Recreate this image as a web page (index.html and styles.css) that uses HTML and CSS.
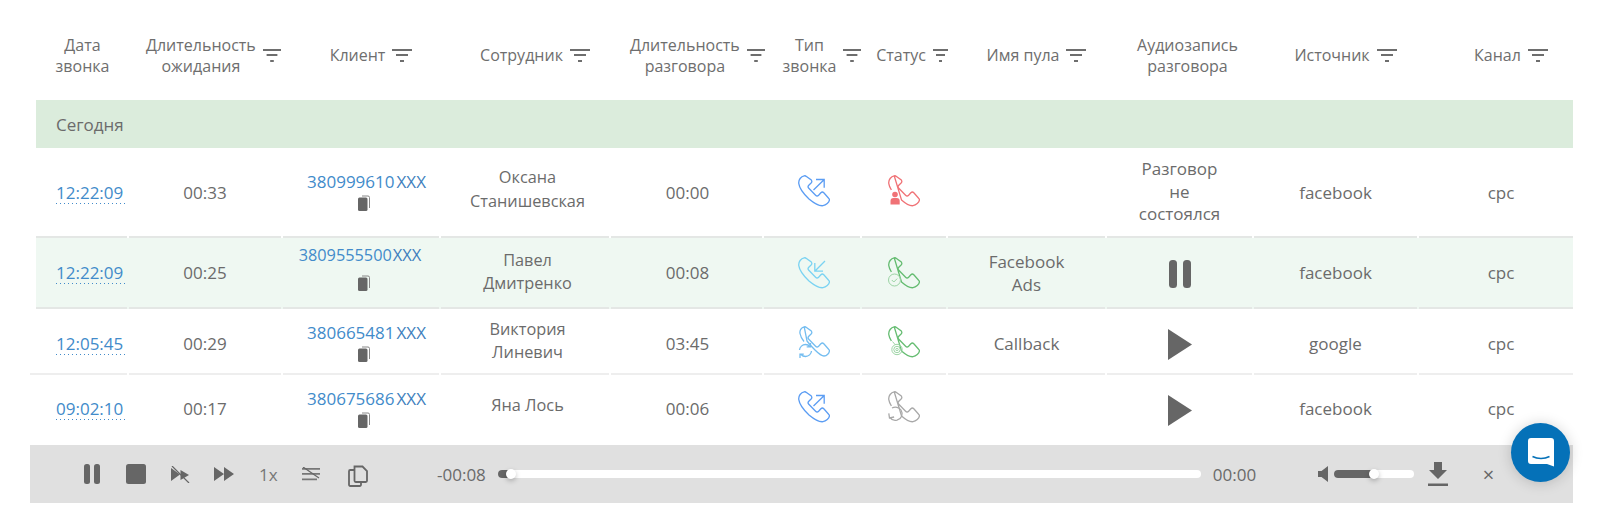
FILE: index.html
```html
<!DOCTYPE html>
<html lang="ru">
<head>
<meta charset="utf-8">
<title>Журнал звонков</title>
<link rel="stylesheet" href="styles.css">
</head>
<body>
<svg class="defs" aria-hidden="true">
  <defs>
    <symbol id="hs" viewBox="0 0 32 32"><path d="M6.200.8C3 1.400.3 4.800.8 8.600 1.500 14 6 19.200 11 24c5 4.200 10 7.200 14 6.700 3-.5 6.200-3.500 6.400-5.700.1-.8-.2-1.300-.8-1.800l-4.800-5.500c-.9-.9-2-.9-2.900 0l-2.300 2.500c-1 1-2 1-3 0l-6.800-7c-1-1-1-2 0-3l2.300-2.200c.9-.9.9-2 .2-3L8.500 1.600C7.900.9 7 .7 6.200.8Z"/></symbol>
    <symbol id="i-out" viewBox="0 0 32 32"><use href="#hs"/><path d="M15.500 15 26 4.800M18 4.500h8.200v8.200"/></symbol>
    <symbol id="i-in" viewBox="0 0 32 32"><use href="#hs"/><path d="M27 4 16.800 14.200M16.800 6v8.200H25"/></symbol>
    <symbol id="i-cb" viewBox="0 0 32 32"><path d="M6.200.8C3 1.400 1.500 4.800 2 7.500c.4 2.500 2 5.500 4 8M9 15c3 4 5.500 6.500 8 9 3 3 6 6 9 6 3 0 5.200-3 5.400-5 .1-.8-.2-1.300-.8-1.800l-4.800-5.500c-.9-.9-2-.9-2.900 0l-2.300 2.500c-1 1-2 1-3 0l-6.800-7c-1-1-1-2 0-3l2.300-2.200c.9-.9.9-2 .2-3L8.500 1.600C7.900.9 7 .7 6.200.8Z"/><path d="M1.500 24c.3-3 2.800-5.500 6-5.500 1.800 0 3.300.7 4.500 2M13.500 25c-.3 3-2.800 5.500-6 5.500-1.800 0-3.300-.7-4.500-2M12.500 17v3.800H8.700M2 32v-3.800h3.800"/></symbol>
    <symbol id="i-cut" viewBox="0 0 32 32"><path d="M6.200.8C3 1.400.3 4.800.8 8.600c.3 2 1.200 4.200 2.600 6.400M13.500 25c4 3.500 8.200 6.100 11.500 5.700 3-.5 6.200-3.500 6.400-5.700.1-.8-.2-1.300-.8-1.800l-4.800-5.500c-.9-.9-2-.9-2.900 0l-2.300 2.500c-1 1-2 1-3 0l-6.800-7c-1-1-1-2 0-3l2.300-2.200c.9-.9.9-2 .2-3L8.500 1.600C7.900.9 7 .7 6.200.8Z"/></symbol>
    <symbol id="i-gray" viewBox="0 0 32 32"><use href="#i-cut"/><path d="M4 17c3-1.500 7-1 9 2 2.500 4 .5 9-4 10.200-3 .7-5.500-.3-7-2.500M.8 22.300 1.500 27l4.600-1"/></symbol>
    <symbol id="filter" viewBox="0 0 20 14" preserveAspectRatio="none"><path d="M0 0h20v2H0zM4 5h12v2H4zM8 11h4v2H8z"/></symbol>
    <symbol id="copy" viewBox="0 0 12 16"><path class="copy-back" d="M4 1h6a1.500 1.500 0 0 1 1.500 1.500V13"/><rect x="0" y="2.500" width="9.500" height="13.500" rx="1.500"/></symbol>
  </defs>
</svg>

<main class="log">
  <div class="row head">
    <div class="th th-plain">Дата<br>звонка</div>
    <div class="th th-wide"><span>Длительность<br>ожидания</span><svg class="flt flt-m"><use href="#filter"/></svg></div>
    <div class="th"><span>Клиент</span><svg class="flt"><use href="#filter"/></svg></div>
    <div class="th"><span>Сотрудник</span><svg class="flt"><use href="#filter"/></svg></div>
    <div class="th th-wide th-wide-talk"><span>Длительность<br>разговора</span><svg class="flt flt-m"><use href="#filter"/></svg></div>
    <div class="th"><span>Тип<br>звонка</span><svg class="flt flt-m"><use href="#filter"/></svg></div>
    <div class="th th-narrow"><span>Статус</span><svg class="flt flt-s"><use href="#filter"/></svg></div>
    <div class="th"><span>Имя пула</span><svg class="flt"><use href="#filter"/></svg></div>
    <div class="th th-audio">Аудиозапись<br>разговора</div>
    <div class="th"><span>Источник</span><svg class="flt"><use href="#filter"/></svg></div>
    <div class="th th-last"><span>Канал</span><svg class="flt"><use href="#filter"/></svg></div>
  </div>

  <div class="band">Сегодня</div>

  <div class="row call call-1">
    <div class="td td-time"><a class="time">12:22:09</a></div>
    <div class="td">00:33</div>
    <div class="td td-client"><a class="num">380999610<span class="xxx">XXX</span></a><svg class="copy"><use href="#copy"/></svg></div>
    <div class="td td-name">Оксана<br>Станишевская</div>
    <div class="td td-talk">00:00</div>
    <div class="td"><svg class="ph ph-out"><use href="#i-out"/></svg></div>
    <div class="td"><svg class="ph ph-red"><use href="#i-cut"/><circle class="glyph-fill" cx="7" cy="19.500" r="2.800"/><path class="glyph-fill" d="M2.500 29.500V26c0-2 1-3 3-3h3.200c2 0 3 1 3 3v3.500Z"/></svg></div>
    <div class="td"></div>
    <div class="td td-note">Разговор<br>не<br>состоялся</div>
    <div class="td">facebook</div>
    <div class="td td-last">cpc</div>
  </div>

  <div class="row call call-2">
    <div class="td td-time"><a class="time">12:22:09</a></div>
    <div class="td">00:25</div>
    <div class="td td-client"><a class="num">3809555500<span class="xxx">XXX</span></a><svg class="copy"><use href="#copy"/></svg></div>
    <div class="td td-name">Павел<br>Дмитренко</div>
    <div class="td td-talk">00:08</div>
    <div class="td"><svg class="ph ph-in"><use href="#i-in"/></svg></div>
    <div class="td"><svg class="ph ph-green"><use href="#i-cut"/><circle class="glyph-soft" cx="6.500" cy="23" r="6"/><path class="glyph-soft" d="m3.800 23 2 2 3.400-3.400"/></svg></div>
    <div class="td">Facebook<br>Ads</div>
    <div class="td"><svg class="pause"><rect x="0" y="0" width="8" height="28" rx="3.500"/><rect x="14" y="0" width="8" height="28" rx="3.500"/></svg></div>
    <div class="td">facebook</div>
    <div class="td td-last">cpc</div>
  </div>

  <div class="row call call-3">
    <div class="td td-time"><a class="time">12:05:45</a></div>
    <div class="td">00:29</div>
    <div class="td td-client"><a class="num">380665481<span class="xxx">XXX</span></a><svg class="copy"><use href="#copy"/></svg></div>
    <div class="td td-name">Виктория<br>Линевич</div>
    <div class="td td-talk">03:45</div>
    <div class="td"><svg class="ph ph-cb"><use href="#i-cb"/></svg></div>
    <div class="td"><svg class="ph ph-green"><use href="#i-cut"/><circle class="glyph-soft" cx="9" cy="23.500" r="5.200"/><circle class="glyph-soft" cx="9" cy="23.500" r="3.200"/><circle class="glyph-soft" cx="9" cy="23.500" r="1.200"/><path class="glyph-soft" d="M4.500 15.500 7 18.500"/></svg></div>
    <div class="td">Callback</div>
    <div class="td"><svg class="play"><path d="M0 0 24 15.500 0 31Z"/></svg></div>
    <div class="td">google</div>
    <div class="td td-last">cpc</div>
  </div>

  <div class="row call call-4">
    <div class="td td-time"><a class="time">09:02:10</a></div>
    <div class="td">00:17</div>
    <div class="td td-client"><a class="num">380675686<span class="xxx">XXX</span></a><svg class="copy"><use href="#copy"/></svg></div>
    <div class="td td-name">Яна Лось</div>
    <div class="td td-talk">00:06</div>
    <div class="td"><svg class="ph ph-out"><use href="#i-out"/></svg></div>
    <div class="td"><svg class="ph ph-grey"><use href="#i-gray"/></svg></div>
    <div class="td"></div>
    <div class="td"><svg class="play"><path d="M0 0 24 15.500 0 31Z"/></svg></div>
    <div class="td">facebook</div>
    <div class="td td-last">cpc</div>
  </div>
</main>

<section class="player">
  <div class="controls">
    <svg class="ctl ctl-pause" viewBox="0 0 16 20"><rect width="6" height="20" rx="2.500"/><rect x="10" width="6" height="20" rx="2.500"/></svg>
    <svg class="ctl ctl-stop" viewBox="0 0 20 20"><rect width="20" height="20" rx="2.500"/></svg>
    <svg class="ctl ctl-slow" viewBox="0 0 19 17"><path d="M0 2 9 8.500 0 15ZM9.500 4 18 9 9.500 14Z"/><path class="slash" d="M1 0 18 17"/></svg>
    <svg class="ctl ctl-fwd" viewBox="0 0 20 14"><path d="M0 0 10 7 0 14ZM10 0 20 7 10 14Z"/></svg>
    <span class="speed">1x</span>
    <svg class="ctl ctl-list" viewBox="0 0 18 14"><path d="M0 1h18v1.800H0zM0 6h18v1.800H0zM0 11.500h15v1.800H0z"/><path class="slash" d="M1 0 17 11"/></svg>
    <svg class="ctl ctl-copy" viewBox="0 0 20 22"><path class="line" d="M6.500 5H2.200A1.200 1.200 0 0 0 1 6.200v13.600A1.200 1.200 0 0 0 2.200 21h9.600a1.200 1.200 0 0 0 1.200-1.200V17M6.500 1.500v14.300a1.200 1.200 0 0 0 1.200 1.200h10.100a1.200 1.200 0 0 0 1.200-1.200V6l-4.500-4.500Z"/></svg>
  </div>
  <span class="clock clock-l">-00:08</span>
  <div class="track track-main"><i class="fill fill-main"></i><i class="knob"></i></div>
  <span class="clock clock-r">00:00</span>
  <svg class="ctl ctl-vol" viewBox="0 0 10 16"><path d="M0 5h3.500L10 0v16L3.500 11H0Z"/></svg>
  <div class="track track-vol"><i class="fill fill-vol"></i><i class="knob"></i></div>
  <svg class="ctl ctl-dl" viewBox="0 0 20 24"><path d="M6 0h8v8h5l-9 9-9-9h5ZM0 21.500h20V24H0z"/></svg>
  <span class="close">×</span>
</section>

<button class="chat" aria-label="Чат">
  <svg viewBox="0 0 26 30"><path d="M3 0h20a3 3 0 0 1 3 3v25.500l-7-2.500H3a3 3 0 0 1-3-3V3a3 3 0 0 1 3-3Z"/><path class="smile" d="M4.500 18.500c5 2.500 12 2.500 17 0"/></svg>
</button>
</body>
</html>
```

FILE: styles.css
```css
* { box-sizing: border-box; }

html, body { margin: 0; height: 526px; overflow: hidden; background: #fff; }

body {
  position: relative;
  font-family: "Open Sans", "Liberation Sans", sans-serif;
  font-size: 17px;
  line-height: 23px;
  color: #6b6b6b;
}

.defs { width: 0; height: 0; display: block; }

.log { margin-left: 36px; width: 1537px; }

.row {
  display: grid;
  grid-template-columns: 93px 154px 158px 170px 153px 98px 86px 159px 147px 165px 154px;
}

.head { height: 100px; padding-top: 12px; }

.th {
  display: flex;
  align-items: center;
  justify-content: center;
  gap: 7px;
  padding-left: 18px;
  font-size: 16px;
  line-height: 21.400px;
  text-align: center;
  color: #6e6e6e;
}
.th-plain { padding-left: 0; }
.th-wide { justify-content: flex-start; padding-left: 17px; }
.th-wide-talk { padding-left: 19px; }
.th-audio { padding-left: 14px; }
.th-narrow { padding-left: 14px; }
.th-last { padding-left: 30px; }

.flt { width: 20px; height: 14px; flex: none; fill: #6e6e6e; }
.flt-m { width: 18px; }
.flt-s { width: 15px; }

.band {
  height: 48px;
  padding-left: 20px;
  display: flex;
  align-items: center;
  background: #dbecdc;
}

.td {
  display: flex;
  flex-direction: column;
  align-items: center;
  justify-content: center;
  margin-right: 2px;
  border-bottom: 2px solid #e4e7e5;
  text-align: center;
}
.td:last-child { margin-right: 0; }
.td-last { padding-left: 10px; }
.td-name { font-size: 16.300px; line-height: 23.500px; padding-left: 5px; }
.td-talk { padding-left: 2px; }
.td-note { line-height: 22.500px; }
.td-client { padding-left: 6px; }

.call-1 { height: 90px; }
.call-1 .td-name { padding-bottom: 5px; }
.call-1 .td-client { padding-bottom: 3px; }
.call-1 .ph { margin-bottom: 2px; }

.call-2 { height: 71px; background: #eff8f2; --row-bg: #eff8f2; }
.call-2 .td-name { padding-bottom: 1px; }
.call-2 .td-client { padding-left: 0; padding-bottom: 11px; }
.call-2 .copy { margin-top: 8px; margin-left: 6px; }
.call-2 .num { margin-left: 0; font-size: 16.300px; font-weight: 500; padding-right: 2px; }
.call-2 .xxx { margin-left: 1px; font-size: 16.500px; }

.call-3 { height: 66px; }
.call-3 .td { padding-top: 4px; border-bottom-color: #eeeeee; }
.call-3 .td-time { margin-left: -6px; padding-left: 26px; }
.call-3 .td-name { padding-bottom: 4px; }
.call-3 .td-client { padding-bottom: 3px; }
.call-3 .ph { margin-bottom: 2px; }

.call-4 { height: 70px; }
.call-4 .td { border-bottom: 0; padding-bottom: 4px; }
.call-4 .td-name { padding-bottom: 8px; }
.call-4 .td-client { padding-bottom: 6px; }
.call-4 .ph { margin-bottom: 2px; }

.td-time { align-items: flex-start; padding-left: 20px; }
.time {
  display: inline-block;
  padding-right: 2px;
  color: #428bca;
  background: linear-gradient(to right, #428bca 1px, transparent 1px) left bottom / 4px 1px repeat-x;
}

.num { margin-left: 5px; color: #428bca; }
.xxx { margin-left: 2px; color: #3f7fbd; }

.copy { width: 12px; height: 16px; fill: #666; margin-top: 2px; overflow: visible; }
.copy-back { fill: none; stroke: #888; stroke-width: 1; }

.ph {
  width: 32px;
  height: 32px;
  margin-left: 3px;
  fill: none;
  stroke: currentColor;
  stroke-width: 1.300;
  opacity: .85;
  overflow: visible;
}
.ph-red, .ph-green, .ph-grey { margin-left: 0; }
.ph-out { color: #3f8cf2; }
.ph-in { color: #66cdf2; }
.ph-cb { color: #5cb2ee; }
.ph-red { color: #ee5a5f; }
.ph-green { color: #4cb25a; }
.ph-grey { color: #9a9a9a; }

.glyph-fill { fill: currentColor; stroke: none; }
.glyph-soft { stroke: #8dce97; fill: none; stroke-width: 1; }

.pause { width: 22px; height: 28px; margin-top: 2px; fill: #666; }
.play { width: 24px; height: 31px; margin-top: 2px; fill: #666; }
.call-4 .play { margin-top: 4px; }

.player {
  display: flex;
  align-items: center;
  height: 58px;
  margin-left: 30px;
  width: 1543px;
  padding-left: 54px;
  background: #e0e0e0;
}

.controls { display: flex; align-items: center; width: 353px; }

.ctl { flex: none; fill: #666; }
.ctl-pause { width: 16px; height: 20px; }
.ctl-stop { width: 20px; height: 20px; margin-left: 26px; }
.ctl-slow { width: 19px; height: 17px; margin-left: 25px; }
.ctl-fwd { width: 20px; height: 14px; margin-left: 24px; }
.speed { margin-left: 25px; width: 18px; font-size: 17px; color: #777; }
.ctl-list { width: 18px; height: 14px; margin-left: 25px; fill: #777; }
.ctl-copy { width: 20px; height: 22px; margin-left: 28px; margin-top: 3px; }
.line { fill: none; stroke: #666; stroke-width: 1.800; }
.slash { stroke: #666; stroke-width: 1.200; fill: none; }

.clock { flex: none; font-size: 17px; color: #6a6a6a; }
.clock-r { margin-left: 12px; width: 105px; }

.track {
  position: relative;
  flex: none;
  height: 8px;
  border-radius: 4px;
  background: #fff;
}
.track-main { width: 703px; margin-left: 12px; }
.track-vol { width: 80px; margin-left: 6px; }

.fill { display: block; height: 8px; border-radius: 4px; background: #666; }
.fill-main { width: 13px; }
.fill-vol { width: 40px; }

.knob {
  position: absolute;
  top: -1px;
  width: 10px;
  height: 10px;
  border-radius: 50%;
  background: #fff;
  box-shadow: 0 2px 5px rgba(0, 0, 0, .25);
}
.track-main .knob { left: 8px; }
.track-vol .knob { left: 35px; }

.ctl-vol { width: 10px; height: 16px; }
.ctl-dl { width: 20px; height: 24px; margin-left: 14px; }
.close { margin-left: 35px; font-size: 20px; color: #666; }

.chat {
  position: absolute;
  left: 1511px;
  top: 423px;
  width: 59px;
  height: 59px;
  padding: 0;
  border: 0;
  border-radius: 50%;
  background: #0571b8;
  box-shadow: 0 1px 14px rgba(0, 0, 0, .18);
  display: flex;
  align-items: center;
  justify-content: center;
}
.chat svg { width: 26px; height: 30px; fill: #fff; }
.smile { fill: none; stroke: #0571b8; stroke-width: 1.500; }
```
